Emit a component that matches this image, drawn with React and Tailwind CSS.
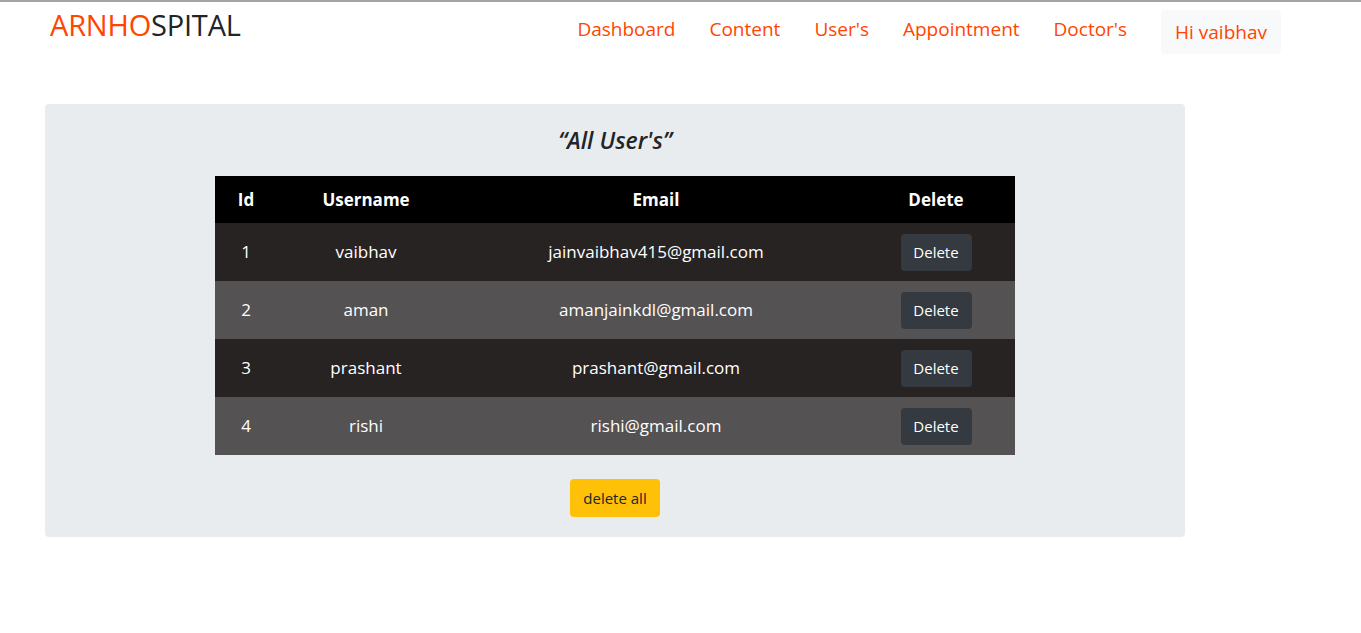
import React from "react";

const users = [
  { id: 1, username: "vaibhav", email: "jainvaibhav415@gmail.com" },
  { id: 2, username: "aman", email: "amanjainkdl@gmail.com" },
  { id: 3, username: "prashant", email: "prashant@gmail.com" },
  { id: 4, username: "rishi", email: "rishi@gmail.com" },
];

const navLinks = ["Dashboard", "Content", "User's", "Appointment", "Doctor's"];

const App = () => {
  return (
    <div
      className="min-h-screen bg-white border-t-2 border-[#a3a3a3]"
      style={{ fontFamily: '"Open Sans", "Noto Sans", sans-serif' }}
    >
      {/* Navbar */}
      <div className="flex items-start justify-between pl-[50px] pr-[80px]">
        <div className="mt-[5px] text-[29px] leading-[36px] tracking-[-0.2px]">
          <span className="text-[#ff4500]">ARNHO</span>
          <span className="text-[#212529]">SPITAL</span>
        </div>
        <div className="flex items-start gap-[34px]">
          {navLinks.map((link) => (
            <a
              key={link}
              className="mt-[14px] text-[19px] leading-[26px] text-[#ff4500] cursor-pointer"
            >
              {link}
            </a>
          ))}
          <div className="mt-[8px] bg-[#f8f9fa] rounded px-[14px] h-[44px] flex items-center text-[19px] text-[#ff4500]">
            Hi vaibhav
          </div>
        </div>
      </div>

      {/* Users panel */}
      <div className="ml-[45px] mt-[50px] w-[1140px] bg-[#e9ecef] rounded pt-[20px] pb-[20px] flex flex-col items-center">
        <h2 className="text-[23px] font-semibold italic text-[#212529] leading-[32px]">
          “All User's”
        </h2>
        <table className="mt-[20px] w-[800px] text-white text-center">
          <thead>
            <tr className="bg-black h-[47px] text-[17px] font-bold">
              <th className="w-[62px]">Id</th>
              <th className="w-[178px]">Username</th>
              <th className="w-[402px]">Email</th>
              <th className="w-[158px]">Delete</th>
            </tr>
          </thead>
          <tbody className="text-[17px]">
            {users.map((user, i) => (
              <tr
                key={user.id}
                className={`h-[58px] ${i % 2 === 0 ? "bg-[#272322]" : "bg-[#545253]"}`}
              >
                <td>{user.id}</td>
                <td>{user.username}</td>
                <td>{user.email}</td>
                <td>
                  <button className="bg-[#343a40] rounded w-[71px] h-[37px] text-[15px] text-white">
                    Delete
                  </button>
                </td>
              </tr>
            ))}
          </tbody>
        </table>
        <button className="mt-[24px] bg-[#ffc107] rounded w-[90px] h-[38px] text-[15px] text-[#212529]">
          delete all
        </button>
      </div>
    </div>
  );
};

export default App;
